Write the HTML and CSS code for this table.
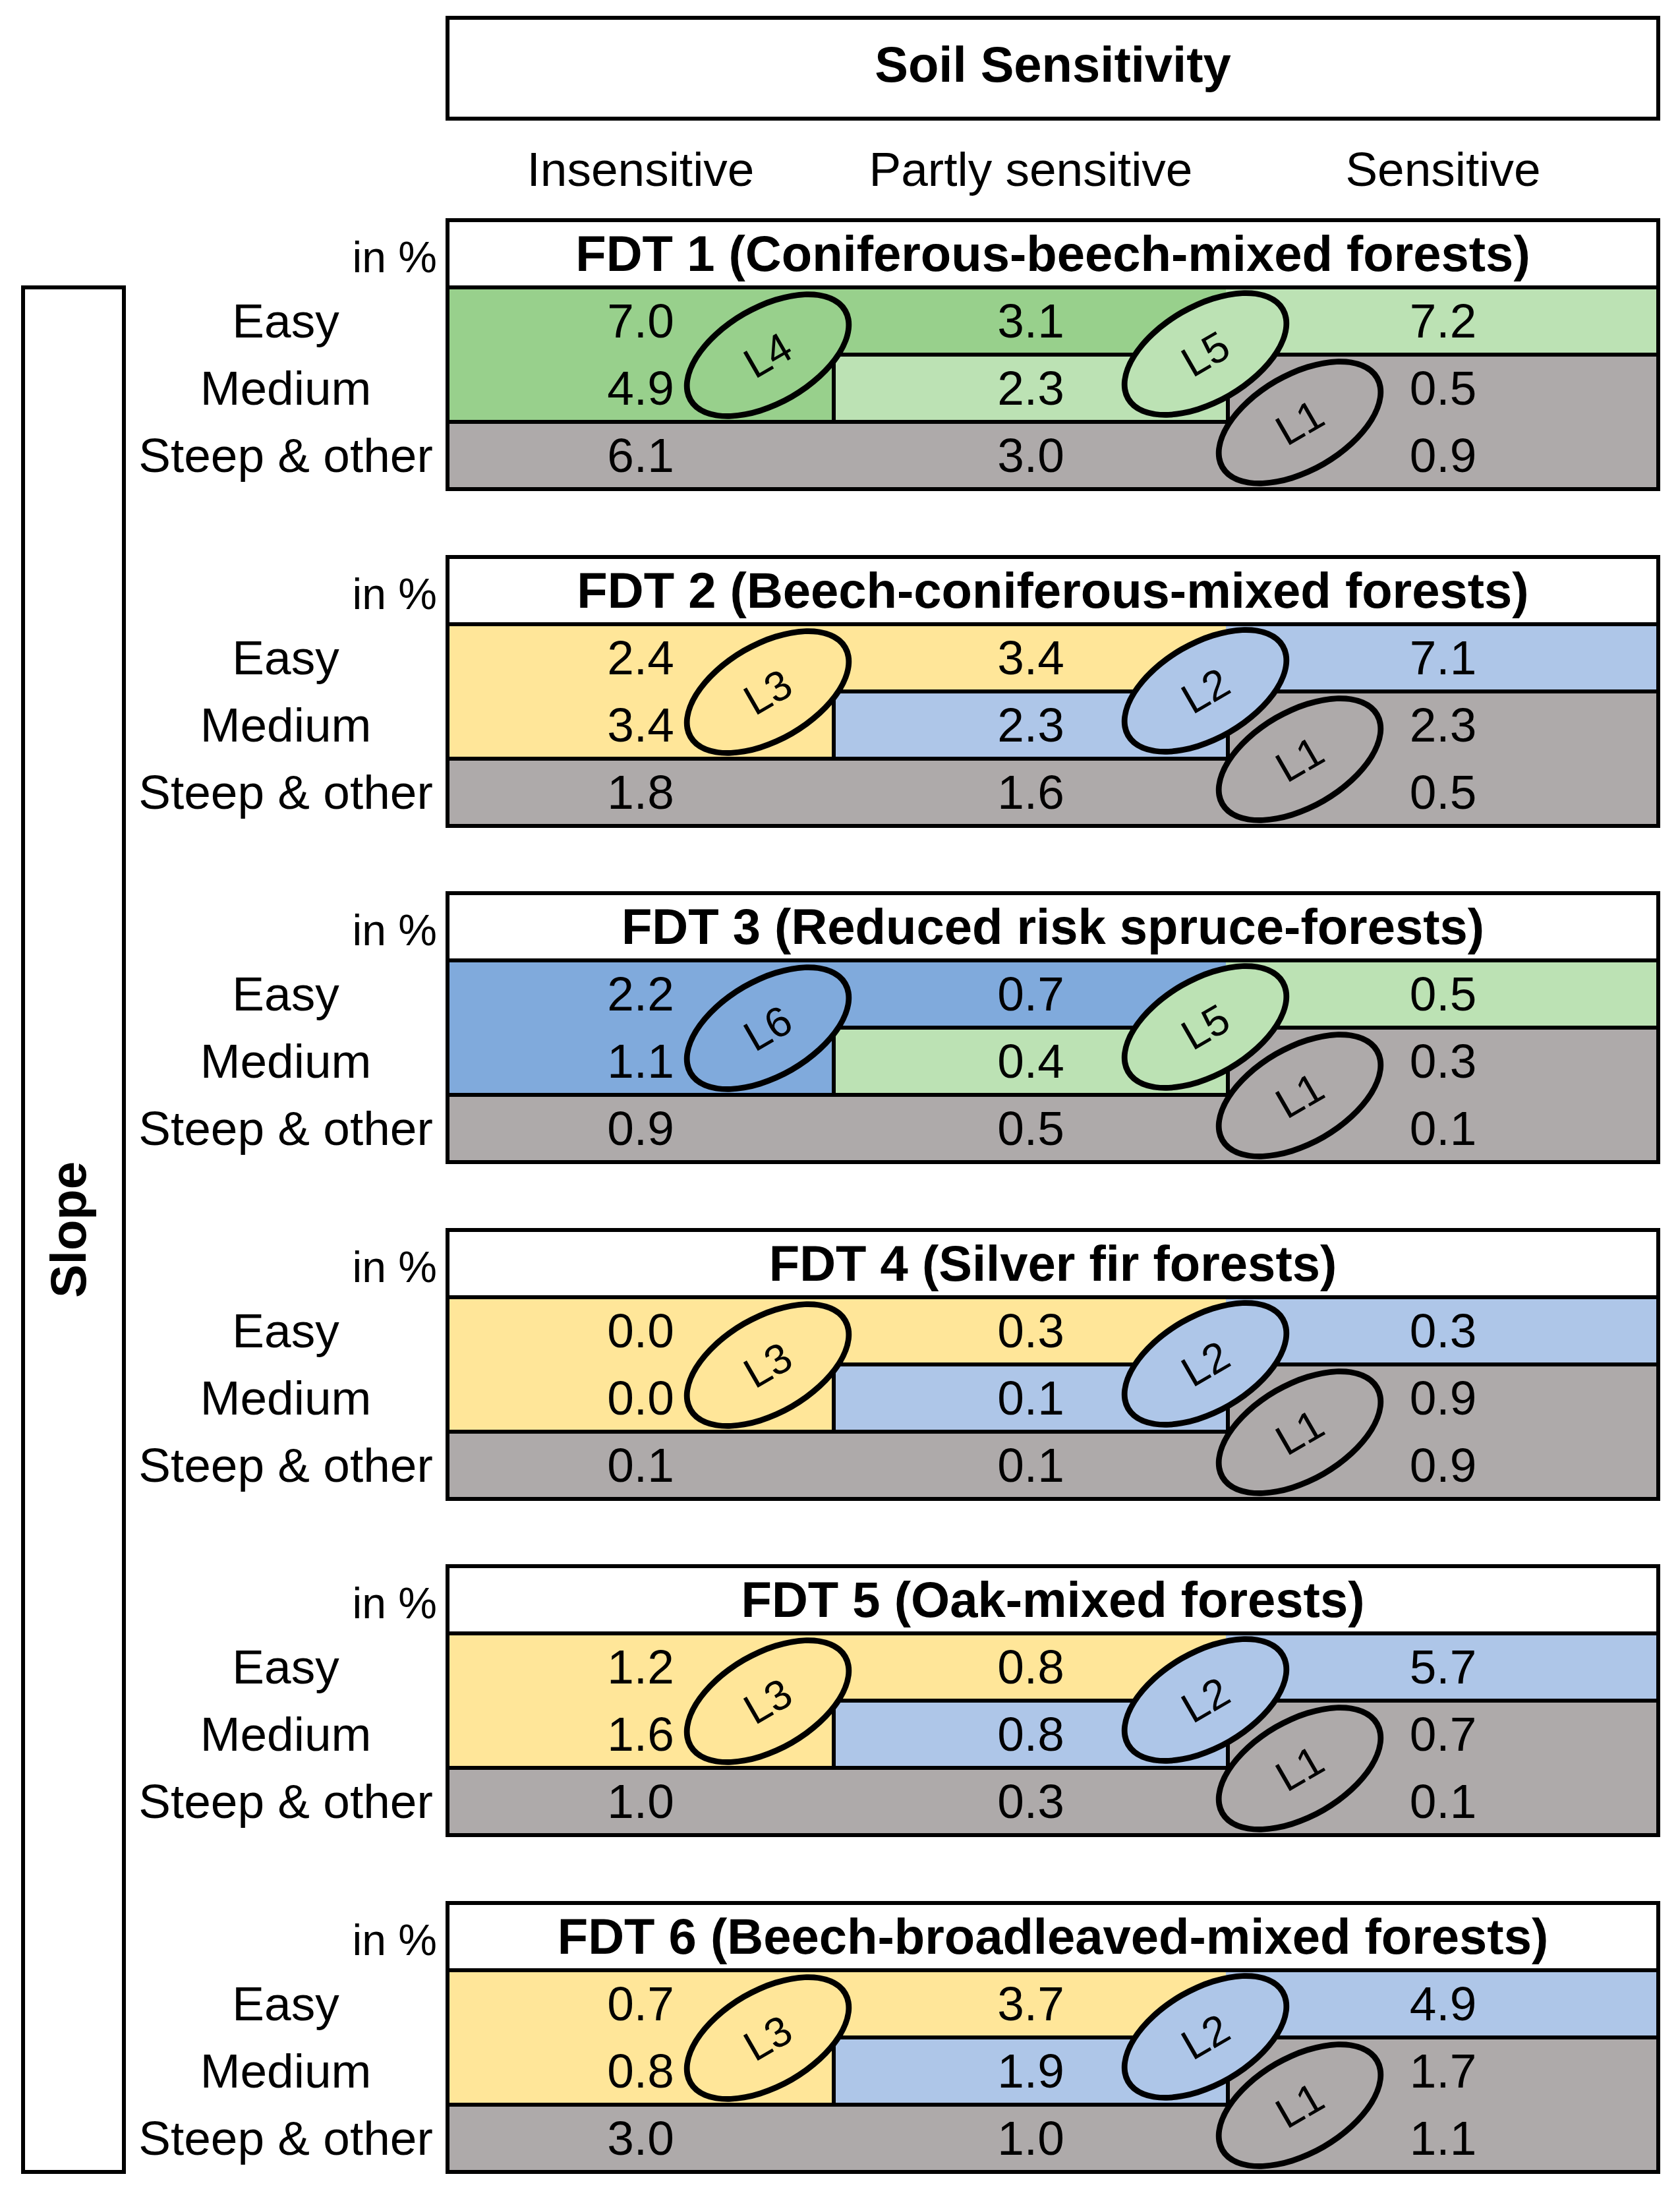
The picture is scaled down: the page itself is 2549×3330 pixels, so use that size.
FILE: index.html
```html
<!DOCTYPE html>
<html lang="en">
<head>
<meta charset="utf-8">
<title>Soil Sensitivity by Slope</title>
<link rel="stylesheet" href="styles.css">
</head>
<body>
<div class="page">
  <div class="head">
    <div class="soil">Soil Sensitivity</div>
    <div class="cols">
      <span class="col c1">Insensitive</span>
      <span class="col c3">Partly sensitive</span>
      <span class="col c5">Sensitive</span>
    </div>
  </div>
  <div class="main">
    <div class="slope"><span class="slope-text">Slope</span></div>
    <div class="blocks">

      <section class="block">
        <div class="labels">
          <div class="unit">in %</div>
          <div class="rowlabel">Easy</div>
          <div class="rowlabel">Medium</div>
          <div class="rowlabel">Steep &amp; other</div>
        </div>
        <div class="table">
          <div class="title">FDT 1 (Coniferous-beech-mixed forests)</div>
          <div class="grid s-green">
            <div class="area a-top"></div><div class="area a-left"></div>
            <div class="area b-top"></div><div class="area b-mid"></div>
            <div class="area g-right"></div><div class="area g-bottom"></div>
            <span class="v r1 c1">7.0</span><span class="v r1 c3">3.1</span><span class="v r1 c5">7.2</span>
            <span class="v r3 c1">4.9</span><span class="v r3 c3">2.3</span><span class="v r3 c5">0.5</span>
            <span class="v r5 c1">6.1</span><span class="v r5 c3">3.0</span><span class="v r5 c5">0.9</span>
            <div class="ell e1">L4</div><div class="ell e2">L5</div><div class="ell e3">L1</div>
          </div>
        </div>
      </section>

      <section class="block">
        <div class="labels">
          <div class="unit">in %</div>
          <div class="rowlabel">Easy</div>
          <div class="rowlabel">Medium</div>
          <div class="rowlabel">Steep &amp; other</div>
        </div>
        <div class="table">
          <div class="title">FDT 2 (Beech-coniferous-mixed forests)</div>
          <div class="grid s-yellow">
            <div class="area a-top"></div><div class="area a-left"></div>
            <div class="area b-top"></div><div class="area b-mid"></div>
            <div class="area g-right"></div><div class="area g-bottom"></div>
            <span class="v r1 c1">2.4</span><span class="v r1 c3">3.4</span><span class="v r1 c5">7.1</span>
            <span class="v r3 c1">3.4</span><span class="v r3 c3">2.3</span><span class="v r3 c5">2.3</span>
            <span class="v r5 c1">1.8</span><span class="v r5 c3">1.6</span><span class="v r5 c5">0.5</span>
            <div class="ell e1">L3</div><div class="ell e2">L2</div><div class="ell e3">L1</div>
          </div>
        </div>
      </section>

      <section class="block">
        <div class="labels">
          <div class="unit">in %</div>
          <div class="rowlabel">Easy</div>
          <div class="rowlabel">Medium</div>
          <div class="rowlabel">Steep &amp; other</div>
        </div>
        <div class="table">
          <div class="title">FDT 3 (Reduced risk spruce-forests)</div>
          <div class="grid s-blue">
            <div class="area a-top"></div><div class="area a-left"></div>
            <div class="area b-top"></div><div class="area b-mid"></div>
            <div class="area g-right"></div><div class="area g-bottom"></div>
            <span class="v r1 c1">2.2</span><span class="v r1 c3">0.7</span><span class="v r1 c5">0.5</span>
            <span class="v r3 c1">1.1</span><span class="v r3 c3">0.4</span><span class="v r3 c5">0.3</span>
            <span class="v r5 c1">0.9</span><span class="v r5 c3">0.5</span><span class="v r5 c5">0.1</span>
            <div class="ell e1">L6</div><div class="ell e2">L5</div><div class="ell e3">L1</div>
          </div>
        </div>
      </section>

      <section class="block">
        <div class="labels">
          <div class="unit">in %</div>
          <div class="rowlabel">Easy</div>
          <div class="rowlabel">Medium</div>
          <div class="rowlabel">Steep &amp; other</div>
        </div>
        <div class="table">
          <div class="title">FDT 4 (Silver fir forests)</div>
          <div class="grid s-yellow">
            <div class="area a-top"></div><div class="area a-left"></div>
            <div class="area b-top"></div><div class="area b-mid"></div>
            <div class="area g-right"></div><div class="area g-bottom"></div>
            <span class="v r1 c1">0.0</span><span class="v r1 c3">0.3</span><span class="v r1 c5">0.3</span>
            <span class="v r3 c1">0.0</span><span class="v r3 c3">0.1</span><span class="v r3 c5">0.9</span>
            <span class="v r5 c1">0.1</span><span class="v r5 c3">0.1</span><span class="v r5 c5">0.9</span>
            <div class="ell e1">L3</div><div class="ell e2">L2</div><div class="ell e3">L1</div>
          </div>
        </div>
      </section>

      <section class="block">
        <div class="labels">
          <div class="unit">in %</div>
          <div class="rowlabel">Easy</div>
          <div class="rowlabel">Medium</div>
          <div class="rowlabel">Steep &amp; other</div>
        </div>
        <div class="table">
          <div class="title">FDT 5 (Oak-mixed forests)</div>
          <div class="grid s-yellow">
            <div class="area a-top"></div><div class="area a-left"></div>
            <div class="area b-top"></div><div class="area b-mid"></div>
            <div class="area g-right"></div><div class="area g-bottom"></div>
            <span class="v r1 c1">1.2</span><span class="v r1 c3">0.8</span><span class="v r1 c5">5.7</span>
            <span class="v r3 c1">1.6</span><span class="v r3 c3">0.8</span><span class="v r3 c5">0.7</span>
            <span class="v r5 c1">1.0</span><span class="v r5 c3">0.3</span><span class="v r5 c5">0.1</span>
            <div class="ell e1">L3</div><div class="ell e2">L2</div><div class="ell e3">L1</div>
          </div>
        </div>
      </section>

      <section class="block">
        <div class="labels">
          <div class="unit">in %</div>
          <div class="rowlabel">Easy</div>
          <div class="rowlabel">Medium</div>
          <div class="rowlabel">Steep &amp; other</div>
        </div>
        <div class="table">
          <div class="title">FDT 6 (Beech-broadleaved-mixed forests)</div>
          <div class="grid s-yellow">
            <div class="area a-top"></div><div class="area a-left"></div>
            <div class="area b-top"></div><div class="area b-mid"></div>
            <div class="area g-right"></div><div class="area g-bottom"></div>
            <span class="v r1 c1">0.7</span><span class="v r1 c3">3.7</span><span class="v r1 c5">4.9</span>
            <span class="v r3 c1">0.8</span><span class="v r3 c3">1.9</span><span class="v r3 c5">1.7</span>
            <span class="v r5 c1">3.0</span><span class="v r5 c3">1.0</span><span class="v r5 c5">1.1</span>
            <div class="ell e1">L3</div><div class="ell e2">L2</div><div class="ell e3">L1</div>
          </div>
        </div>
      </section>

    </div>
  </div>
</div>
</body>
</html>
```
FILE: styles.css
```css
* { box-sizing: border-box; }

html, body {
  margin: 0;
  padding: 0;
  background: #ffffff;
}

body {
  width: 2549px;
  height: 3330px;
  font-family: "Liberation Sans", Arial, sans-serif;
  color: #000;
}

.page {
  padding: 24px 30px 0 32px;
}

/* ---------- header ---------- */
.head {
  margin-left: 644px;
  width: 1843px;
}

.soil {
  height: 159px;
  border: 6px solid #000;
  font-weight: bold;
  font-size: 76px;
  line-height: 135px;
  text-align: center;
}

.cols {
  display: grid;
  grid-template-columns: 580px 6px 592px 6px 647px;
  padding: 0 6px;
  height: 148px;
  font-size: 73px;
  line-height: 148px;
}

.col { text-align: center; white-space: nowrap; }
.cols .c1 { grid-column: 1; }
.cols .c3 { grid-column: 3; }
.cols .c5 { grid-column: 5; }

/* ---------- main body ---------- */
.main {
  display: grid;
  grid-template-columns: 159px 2328px;
}

.slope {
  margin-top: 102px;
  border: 6px solid #000;
  display: flex;
  align-items: center;
  justify-content: center;
  padding-right: 16px;
}

.slope-text {
  writing-mode: vertical-rl;
  transform: rotate(180deg);
  font-weight: bold;
  font-size: 76px;
  line-height: 1;
  white-space: nowrap;
}

.blocks {
  display: flex;
  flex-direction: column;
  gap: 96.6px;
}

.block {
  display: grid;
  grid-template-columns: 485px 1843px;
}

/* ---------- left labels ---------- */
.labels {
  display: flex;
  flex-direction: column;
  gap: 6px;
}

.unit {
  height: 108px;
  margin-bottom: -6px;
  padding-top: 11px;
  padding-right: 13px;
  font-size: 66px;
  line-height: 96px;
  text-align: right;
  white-space: nowrap;
}

.rowlabel {
  height: 96px;
  font-size: 73px;
  line-height: 96px;
  text-align: center;
  white-space: nowrap;
}

/* ---------- table ---------- */
.table {
  border: 6px solid #000;
}

.title {
  height: 102px;
  border-bottom: 6px solid #000;
  font-weight: bold;
  font-size: 76px;
  line-height: 96px;
  text-align: center;
  white-space: nowrap;
}

.grid {
  position: relative;
  display: grid;
  grid-template-columns: 580px 6px 592px 6px 647px;
  grid-template-rows: 96px 6px 96px 6px 96px;
  background: #000;
  --g: #aeaaaa;
}

.s-green  { --a: #98d08c; --b: #bce2b4; }
.s-yellow { --a: #ffe699; --b: #aec6e8; }
.s-blue   { --a: #80aadc; --b: #bce2b4; }

.a-top    { grid-column: 1 / 4; grid-row: 1; background: var(--a); }
.a-left   { grid-column: 1; grid-row: 1 / 4; background: var(--a); }
.b-top    { grid-column: 4 / 6; grid-row: 1; background: var(--b); }
.b-mid    { grid-column: 3; grid-row: 3; background: var(--b); }
.g-right  { grid-column: 5; grid-row: 3 / 6; background: var(--g); }
.g-bottom { grid-column: 1 / 6; grid-row: 5; background: var(--g); }

.v {
  justify-self: center;
  font-size: 73px;
  line-height: 96px;
  white-space: nowrap;
}

.r1 { grid-row: 1; }
.r3 { grid-row: 3; }
.r5 { grid-row: 5; }
.grid .c1 { grid-column: 1; }
.grid .c3 { grid-column: 3; }
.grid .c5 { grid-column: 5; }

/* ---------- ellipse tags ---------- */
.ell {
  position: absolute;
  width: 280px;
  height: 154px;
  margin: -77px 0 0 -140px;
  border: 9px solid #000;
  border-radius: 50%;
  transform: rotate(-30deg);
  display: flex;
  align-items: center;
  justify-content: center;
  font-size: 64px;
  line-height: 1;
}

.e1 { left: 483px; top: 100px; background: var(--a); }
.e2 { left: 1147px; top: 98px; background: var(--b); }
.e3 { left: 1290px; top: 202px; background: var(--g); }
```
